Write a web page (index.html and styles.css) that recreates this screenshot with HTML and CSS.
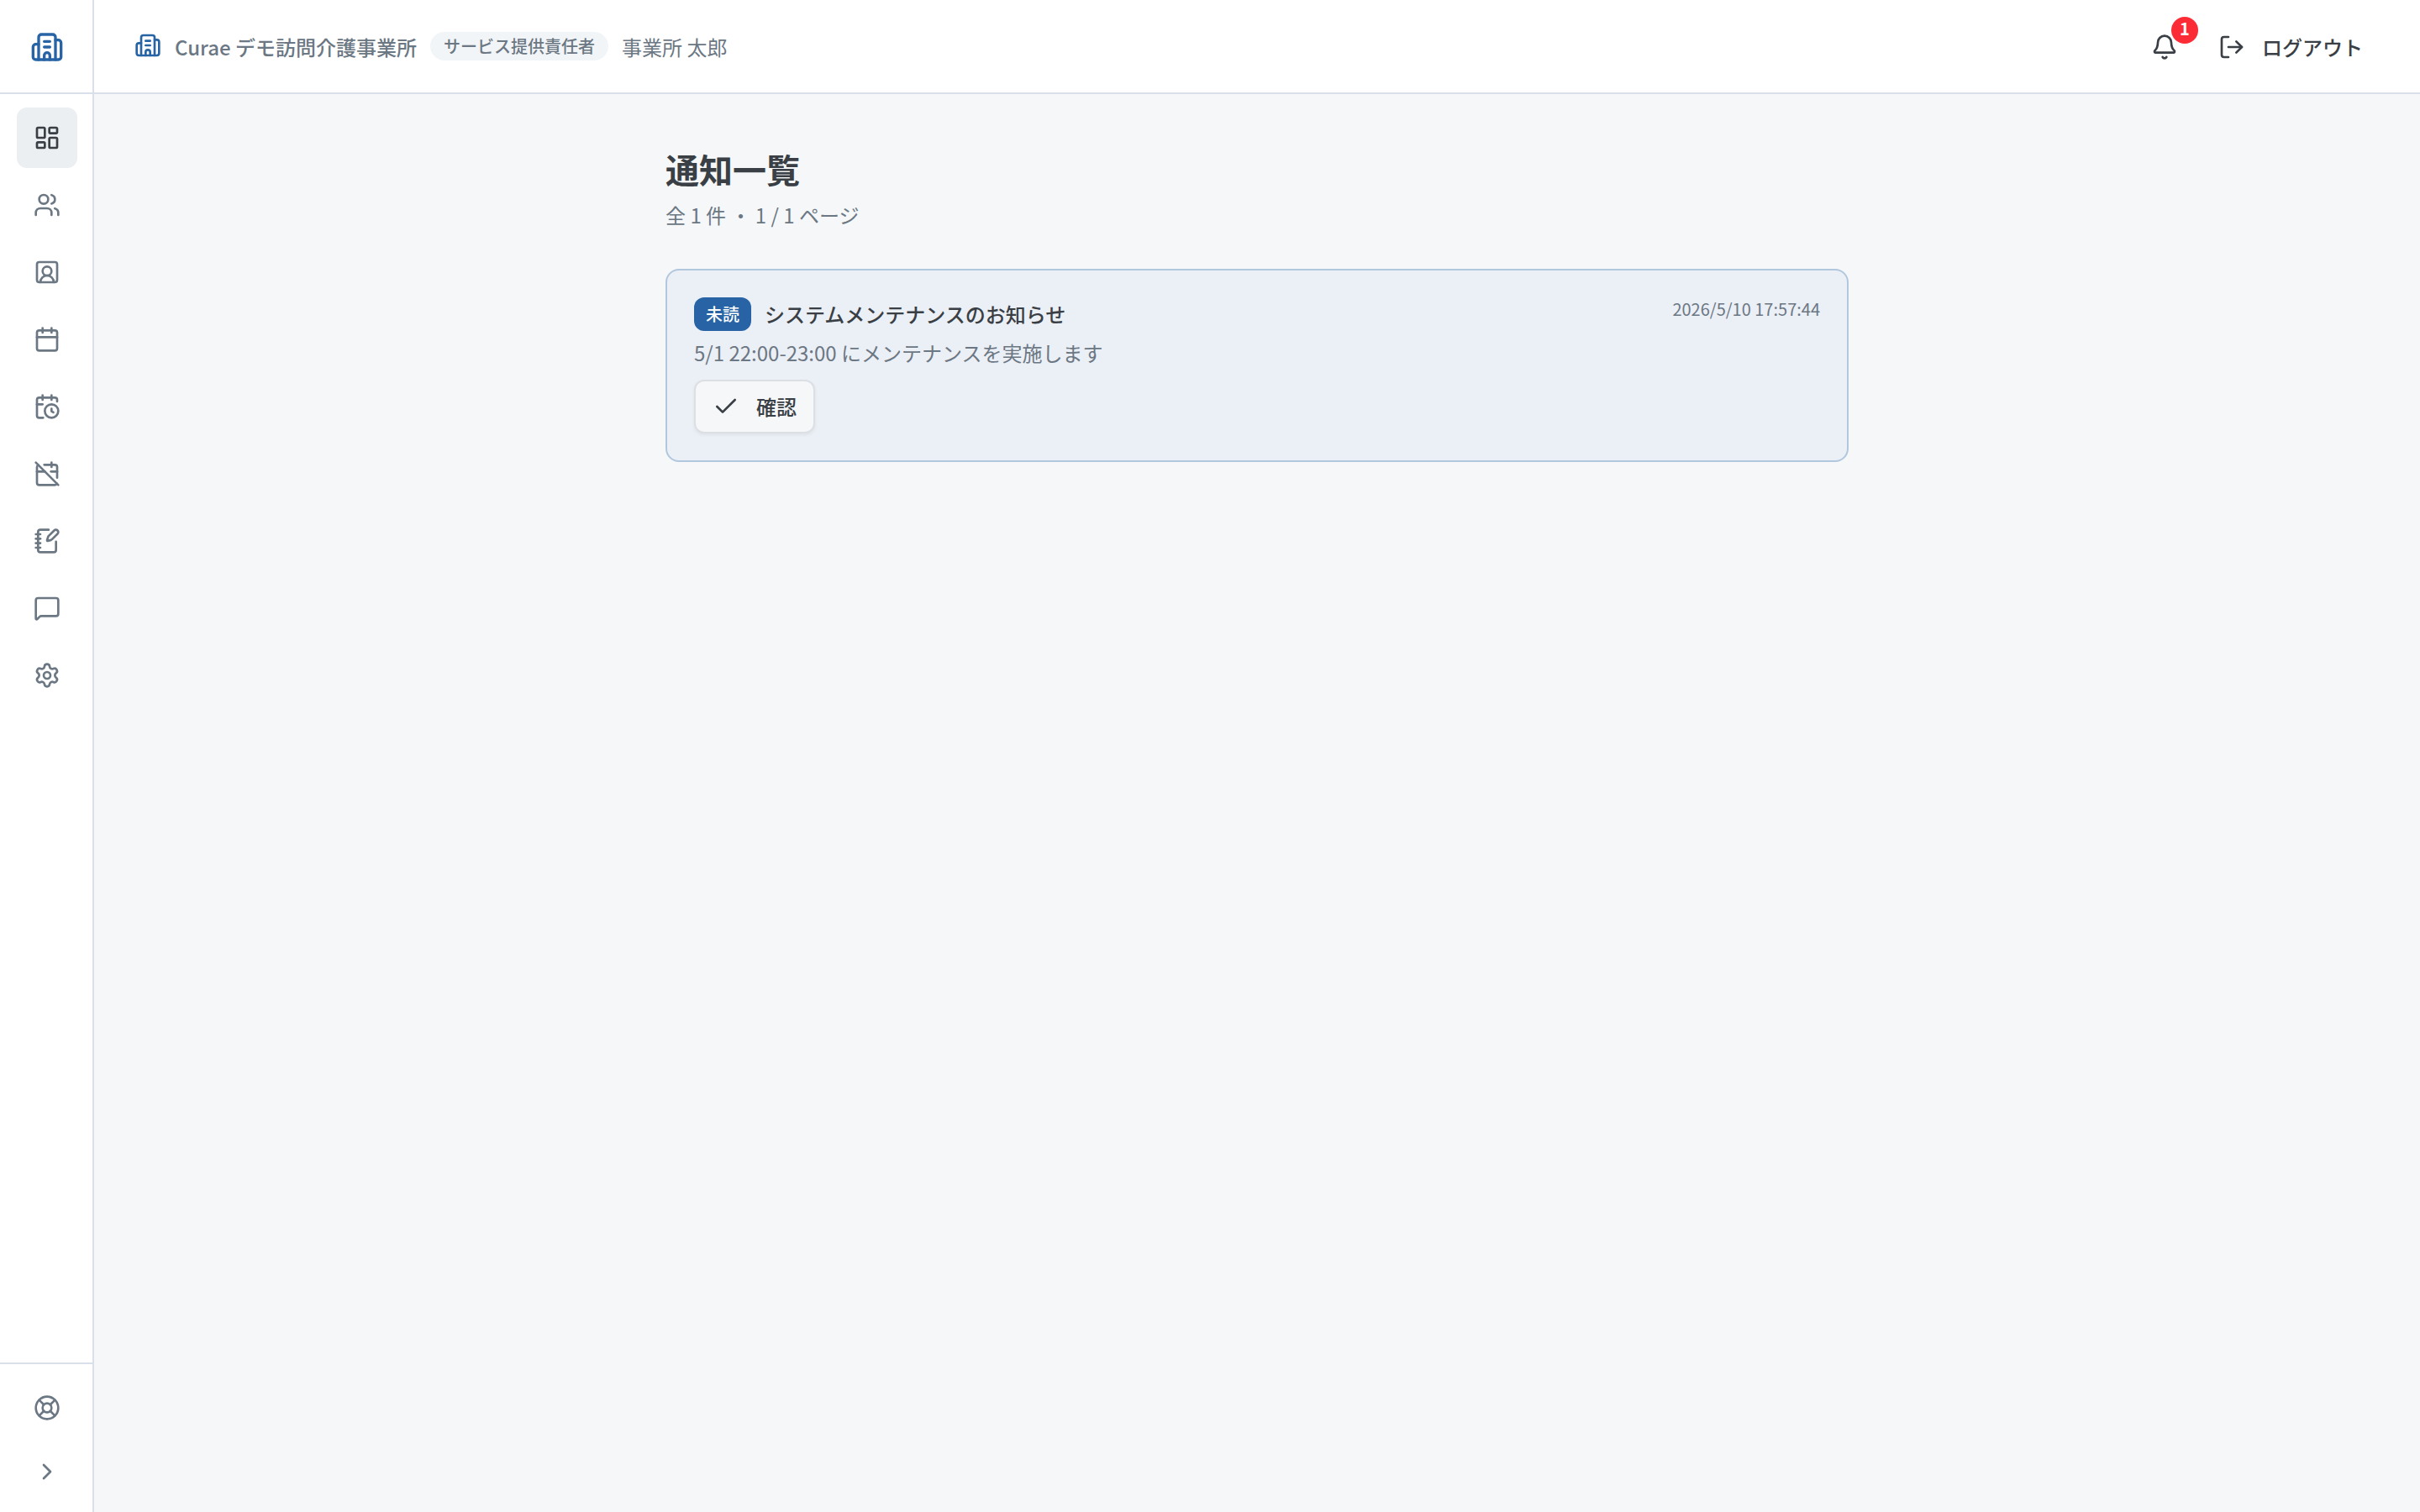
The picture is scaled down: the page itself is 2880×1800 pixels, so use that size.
FILE: index.html
```html
<!DOCTYPE html>
<html lang="ja">
<head>
  <meta charset="UTF-8" />
  <meta name="viewport" content="width=device-width, initial-scale=1.0" />
  <title>通知一覧 | Curae</title>
  <link rel="stylesheet" href="styles.css">
</head>
<body>
  <aside class="sidebar">
    <a class="sidebar-logo" href="#">
      <svg class="icon icon-lg" viewBox="0 0 24 24"><path d="M10 12h4"/><path d="M10 8h4"/><path d="M14 21v-3a2 2 0 0 0-4 0v3"/><path d="M6 10H4a2 2 0 0 0-2 2v7a2 2 0 0 0 2 2h16a2 2 0 0 0 2-2V9a2 2 0 0 0-2-2h-2"/><path d="M6 21V5a2 2 0 0 1 2-2h8a2 2 0 0 1 2 2v16"/></svg>
    </a>
    <nav class="sidebar-nav">
      <a class="nav-item active" href="#" aria-label="ダッシュボード">
        <svg class="icon" viewBox="0 0 24 24"><rect width="7" height="9" x="3" y="3" rx="1"/><rect width="7" height="5" x="14" y="3" rx="1"/><rect width="7" height="9" x="14" y="12" rx="1"/><rect width="7" height="5" x="3" y="16" rx="1"/></svg>
      </a>
      <a class="nav-item" href="#" aria-label="利用者">
        <svg class="icon" viewBox="0 0 24 24"><path d="M16 21v-2a4 4 0 0 0-4-4H6a4 4 0 0 0-4 4v2"/><path d="M16 3.128a4 4 0 0 1 0 7.744"/><path d="M22 21v-2a4 4 0 0 0-3-3.87"/><circle cx="9" cy="7" r="4"/></svg>
      </a>
      <a class="nav-item" href="#" aria-label="スタッフ">
        <svg class="icon" viewBox="0 0 24 24"><path d="M18 21a6 6 0 0 0-12 0"/><circle cx="12" cy="11" r="4"/><rect width="18" height="18" x="3" y="3" rx="2"/></svg>
      </a>
      <a class="nav-item" href="#" aria-label="カレンダー">
        <svg class="icon" viewBox="0 0 24 24"><path d="M8 2v4"/><path d="M16 2v4"/><rect width="18" height="18" x="3" y="4" rx="2"/><path d="M3 10h18"/></svg>
      </a>
      <a class="nav-item" href="#" aria-label="勤務時間">
        <svg class="icon" viewBox="0 0 24 24"><path d="M16 14v2.2l1.6 1"/><path d="M16 2v4"/><path d="M21 7.5V6a2 2 0 0 0-2-2H5a2 2 0 0 0-2 2v14a2 2 0 0 0 2 2h3.5"/><path d="M3 10h5"/><path d="M8 2v4"/><circle cx="16" cy="16" r="6"/></svg>
      </a>
      <a class="nav-item" href="#" aria-label="休み">
        <svg class="icon" viewBox="0 0 24 24"><path d="M4.2 4.2A2 2 0 0 0 3 6v14a2 2 0 0 0 2 2h14a2 2 0 0 0 1.82-1.18"/><path d="M21 15.5V6a2 2 0 0 0-2-2H9.5"/><path d="M16 2v4"/><path d="M3 10h7"/><path d="M21 10h-5.5"/><path d="m2 2 20 20"/></svg>
      </a>
      <a class="nav-item" href="#" aria-label="記録">
        <svg class="icon" viewBox="0 0 24 24"><path d="M13.4 2H6a2 2 0 0 0-2 2v16a2 2 0 0 0 2 2h12a2 2 0 0 0 2-2v-7.4"/><path d="M2 6h4"/><path d="M2 10h4"/><path d="M2 14h4"/><path d="M2 18h4"/><path d="M21.378 5.626a1 1 0 1 0-3.004-3.004l-5.01 5.012a2 2 0 0 0-.506.854l-.837 2.87a.5.5 0 0 0 .62.62l2.87-.837a2 2 0 0 0 .854-.506z"/></svg>
      </a>
      <a class="nav-item" href="#" aria-label="メッセージ">
        <svg class="icon" viewBox="0 0 24 24"><path d="M22 17a2 2 0 0 1-2 2H6.828a2 2 0 0 0-1.414.586l-2.202 2.202A.71.71 0 0 1 2 21.286V5a2 2 0 0 1 2-2h16a2 2 0 0 1 2 2z"/></svg>
      </a>
      <a class="nav-item" href="#" aria-label="設定">
        <svg class="icon" viewBox="0 0 24 24"><path d="M9.671 4.136a2.34 2.34 0 0 1 4.659 0 2.34 2.34 0 0 0 3.319 1.915 2.34 2.34 0 0 1 2.33 4.033 2.34 2.34 0 0 0 0 3.831 2.34 2.34 0 0 1-2.33 4.033 2.34 2.34 0 0 0-3.319 1.915 2.34 2.34 0 0 1-4.659 0 2.34 2.34 0 0 0-3.32-1.915 2.34 2.34 0 0 1-2.33-4.033 2.34 2.34 0 0 0 0-3.831A2.34 2.34 0 0 1 6.35 6.051a2.34 2.34 0 0 0 3.319-1.915"/><circle cx="12" cy="12" r="3"/></svg>
      </a>
    </nav>
    <div class="sidebar-bottom">
      <a class="nav-item" href="#" aria-label="ヘルプ">
        <svg class="icon" viewBox="0 0 24 24"><circle cx="12" cy="12" r="10"/><path d="m4.93 4.93 4.24 4.24"/><path d="m14.83 9.17 4.24-4.24"/><path d="m14.83 14.83 4.24 4.24"/><path d="m9.17 14.83-4.24 4.24"/><circle cx="12" cy="12" r="4"/></svg>
      </a>
      <a class="nav-item" href="#" aria-label="開く">
        <svg class="icon" viewBox="0 0 24 24"><path d="m9 18 6-6-6-6"/></svg>
      </a>
    </div>
  </aside>

  <div class="page">
    <header class="topbar">
      <div class="office">
        <svg class="icon office-icon" viewBox="0 0 24 24"><path d="M10 12h4"/><path d="M10 8h4"/><path d="M14 21v-3a2 2 0 0 0-4 0v3"/><path d="M6 10H4a2 2 0 0 0-2 2v7a2 2 0 0 0 2 2h16a2 2 0 0 0 2-2V9a2 2 0 0 0-2-2h-2"/><path d="M6 21V5a2 2 0 0 1 2-2h8a2 2 0 0 1 2 2v16"/></svg>
        <span class="office-name">Curae デモ訪問介護事業所</span>
        <span class="role">サービス提供責任者</span>
        <span class="user-name">事業所 太郎</span>
      </div>
      <div class="actions">
        <a class="bell" href="#" aria-label="通知">
          <svg class="icon" viewBox="0 0 24 24"><path d="M10.268 21a2 2 0 0 0 3.464 0"/><path d="M3.262 15.326A1 1 0 0 0 4 17h16a1 1 0 0 0 .74-1.673C19.41 13.956 18 12.499 18 8A6 6 0 0 0 6 8c0 4.499-1.411 5.956-2.738 7.326"/></svg>
          <span class="bell-count">1</span>
        </a>
        <button class="logout">
          <svg class="icon" viewBox="0 0 24 24"><path d="m16 17 5-5-5-5"/><path d="M21 12H9"/><path d="M9 21H5a2 2 0 0 1-2-2V5a2 2 0 0 1 2-2h4"/></svg>
          ログアウト
        </button>
      </div>
    </header>

    <main class="content">
      <h1>通知一覧</h1>
      <p class="summary">全 1 件 ・ 1 / 1 ページ</p>

      <article class="notice">
        <div class="notice-body">
          <div class="notice-head">
            <span class="unread">未読</span>
            <h2>システムメンテナンスのお知らせ</h2>
          </div>
          <p class="notice-text">5/1 22:00-23:00 にメンテナンスを実施します</p>
          <button class="confirm">
            <svg class="icon" viewBox="0 0 24 24"><path d="M20 6 9 17l-5-5"/></svg>
            確認
          </button>
        </div>
        <time class="notice-time">2026/5/10 17:57:44</time>
      </article>
    </main>
  </div>
</body>
</html>
```
FILE: styles.css
```css
* {
  box-sizing: border-box;
}
body {
  margin: 0;
  height: 100vh;
  display: flex;
  font-family: "Noto Sans CJK JP", sans-serif;
  font-size: 24px;
  line-height: 36px;
  color: #3a3f45;
  background-color: #f5f7f9;
}
h1,
h2,
p {
  margin: 0;
}
a {
  color: inherit;
  text-decoration: none;
}
button {
  font: inherit;
  font-weight: 500;
  color: inherit;
  cursor: pointer;
}
.icon {
  display: block;
  flex-shrink: 0;
  width: 32px;
  height: 32px;
  fill: none;
  stroke: currentColor;
  stroke-width: 2;
  stroke-linecap: round;
  stroke-linejoin: round;
}
.icon-lg {
  width: 40px;
  height: 40px;
}

/* sidebar */
.sidebar {
  width: 112px;
  flex-shrink: 0;
  display: flex;
  flex-direction: column;
  background-color: #ffffff;
  border-right: 2px solid #d9e0ea;
  color: #6b7783;
}
.sidebar-logo {
  height: 112px;
  padding: 2px 0 0 36px;
  display: flex;
  align-items: center;
  border-bottom: 2px solid #d9e0ea;
  color: #2864a5;
}
.sidebar-nav {
  flex: 1;
  display: flex;
  flex-direction: column;
  gap: 8px;
  padding: 16px 18px 16px 20px;
}
.nav-item {
  width: 72px;
  height: 72px;
  display: flex;
  align-items: center;
  justify-content: center;
  border-radius: 12px;
}
.nav-item.active {
  background-color: #ebeff2;
  color: #3a3f45;
}
.sidebar-bottom {
  display: flex;
  flex-direction: column;
  gap: 4px;
  padding: 16px 18px 12px 20px;
  border-top: 2px solid #d9e0ea;
}

/* top bar */
.page {
  flex: 1;
  min-width: 0;
}
.topbar {
  height: 112px;
  display: flex;
  align-items: center;
  justify-content: space-between;
  padding: 2px 68px 0 48px;
  background-color: #ffffff;
  border-bottom: 2px solid #d9e0ea;
}
.office {
  display: flex;
  align-items: center;
  gap: 16px;
  color: #6b7783;
}
.office-icon {
  margin-bottom: 4px;
  color: #2864a5;
}
.office-name {
  font-weight: 500;
}
.role {
  margin-bottom: 2px;
  padding: 2px 16px;
  border-radius: 17px;
  background-color: #f2f5f7;
  font-size: 20px;
  font-weight: 500;
  line-height: 30px;
}
.actions {
  display: flex;
  align-items: center;
  gap: 16px;
}
.bell {
  position: relative;
  padding: 16px;
  margin-right: 16px;
}
.bell-count {
  position: absolute;
  top: -4px;
  right: -8px;
  width: 32px;
  height: 32px;
  border-radius: 50%;
  background-color: #fb2c36;
  color: #ffffff;
  font-size: 20px;
  font-weight: 700;
  line-height: 28px;
  text-align: center;
}
.logout {
  display: flex;
  align-items: center;
  gap: 20px;
  padding: 0;
  border: none;
  background: none;
}

/* notices */
.content {
  width: 1408px;
  margin: 0 auto;
  padding-top: 64px;
}
h1 {
  font-size: 40px;
  font-weight: 700;
  line-height: 50px;
}
.summary {
  margin-top: 12px;
  color: #6b7783;
}
.notice {
  display: flex;
  justify-content: space-between;
  align-items: flex-start;
  height: 230px;
  margin-top: 46px;
  padding: 32px;
  border: 2px solid #b1c7de;
  border-radius: 16px;
  background-color: #ebeff6;
}
.notice-head {
  display: flex;
  align-items: center;
  gap: 16px;
}
.notice-head h2 {
  font-size: 24px;
  font-weight: 500;
  line-height: 36px;
}
.unread {
  padding: 5px 14px;
  border-radius: 12px;
  background-color: #2864a5;
  color: #ffffff;
  font-size: 20px;
  font-weight: 500;
  line-height: 30px;
}
.notice-text {
  margin-top: 8px;
  color: #6b7783;
}
.confirm {
  display: flex;
  align-items: center;
  gap: 20px;
  height: 64px;
  margin-top: 14px;
  padding: 0 20px;
  border: 2px solid #dce0e5;
  border-radius: 12px;
  background-color: #f5f7f9;
  box-shadow: 0 2px 4px rgba(0, 0, 0, 0.06);
}
.notice-time {
  color: #6b7783;
  font-size: 20px;
  line-height: 28px;
}
```
